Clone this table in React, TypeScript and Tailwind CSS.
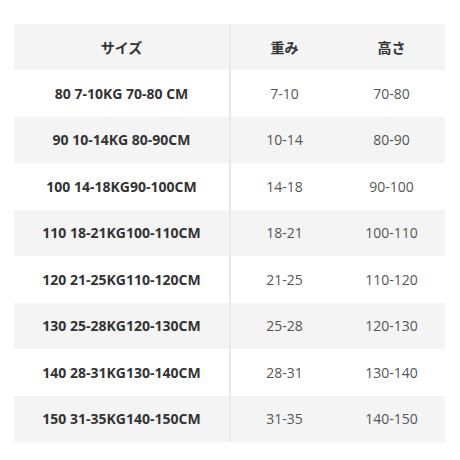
const rows = [
  ['80 7-10KG 70-80 CM', '7-10', '70-80'],
  ['90 10-14KG 80-90CM', '10-14', '80-90'],
  ['100 14-18KG90-100CM', '14-18', '90-100'],
  ['110 18-21KG100-110CM', '18-21', '100-110'],
  ['120 21-25KG110-120CM', '21-25', '110-120'],
  ['130 25-28KG120-130CM', '25-28', '120-130'],
  ['140 28-31KG130-140CM', '28-31', '130-140'],
  ['150 31-35KG140-150CM', '31-35', '140-150'],
]

export default function App() {
  return (
    <div
      className="w-[460px] h-[460px] bg-white pt-[24px] px-[14px] text-[14px]"
      style={{ fontFamily: '"Open Sans", "Noto Sans CJK JP", sans-serif' }}
    >
      <div className="w-[431px]">
        <div className="grid grid-cols-[215px_2px_107px_107px] h-[46px] items-center bg-[#f4f4f4] font-bold text-[#333]">
          <div className="text-center">サイズ</div>
          <div className="h-full bg-[#e9e9e9]" />
          <div className="text-center">重み</div>
          <div className="text-center">高さ</div>
        </div>
        {rows.map((r, i) => (
          <div
            key={r[0]}
            className={`grid grid-cols-[215px_2px_107px_107px] h-[46.5px] items-center ${
              i % 2 === 1 ? 'bg-[#f4f4f4]' : 'bg-white'
            }`}
          >
            <div className="text-center font-bold text-[#333]">{r[0]}</div>
            <div className="h-full bg-[#e9e9e9]" />
            <div className="text-center text-[#555]">{r[1]}</div>
            <div className="text-center text-[#555]">{r[2]}</div>
          </div>
        ))}
      </div>
    </div>
  )
}
